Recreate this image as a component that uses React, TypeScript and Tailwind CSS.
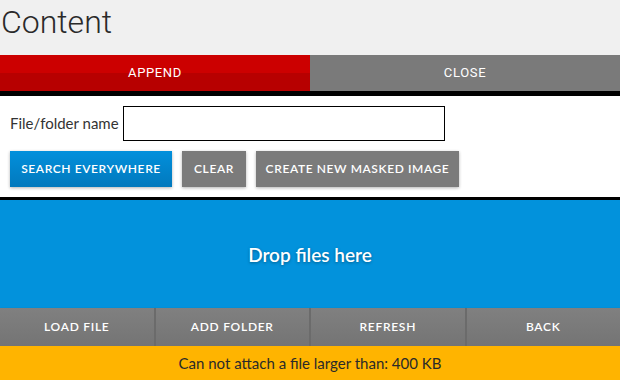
const sans = "font-['Lato','Noto_Sans',sans-serif]";

const ActionButton = ({ label, width, blue }: { label: string; width: string; blue?: boolean }) => (
  <button
    className={`h-[36px] ${width} whitespace-nowrap text-[12px] font-semibold tracking-[0.05em] text-white shadow-[0_1px_3px_rgba(0,0,0,0.3)] ${
      blue ? "bg-gradient-to-b from-[#0290dc] to-[#0279bd]" : "bg-[#7b7b7b]"
    }`}
  >
    {label}
  </button>
);

const BottomButton = ({ label, last }: { label: string; last?: boolean }) => (
  <button
    className={`flex-1 text-[12px] font-semibold tracking-[0.06em] text-white ${
      last ? "" : "border-r-2 border-[#6b6b6b]"
    }`}
  >
    {label}
  </button>
);

export default function App() {
  return (
    <div className={`flex h-[380px] w-[620px] flex-col overflow-hidden bg-white ${sans}`}>
      <header className="h-[55px] bg-[#f0f0f0] shadow-[0_1px_3px_rgba(0,0,0,0.15)]">
        <h1 className="pl-[1px] pt-[2px] font-['Roboto',sans-serif] text-[32px] font-light leading-[40px] text-[#2a2a2a]">
          Content
        </h1>
      </header>

      <nav className="flex h-[36px] font-['Roboto',sans-serif] text-[13px] tracking-[0.05em] text-white">
        <button className="flex-1 bg-gradient-to-b from-[#cc0000] from-50% to-[#b70000] to-50%">APPEND</button>
        <button className="flex-1 bg-[#7a7a7a]">CLOSE</button>
      </nav>
      <div className="h-[5px] bg-black" />

      <section className="flex flex-col gap-[10px] px-[10px] py-[10px]">
        <div className="flex items-center gap-[4px]">
          <label className="text-[15px] text-[#333]">File/folder name</label>
          <input className="h-[35px] w-[322px] border border-black bg-white outline-none" />
        </div>
        <div className="flex gap-[10px]">
          <ActionButton label="SEARCH EVERYWHERE" width="w-[162px]" blue />
          <ActionButton label="CLEAR" width="w-[64px]" />
          <ActionButton label="CREATE NEW MASKED IMAGE" width="w-[203px]" />
        </div>
      </section>
      <div className="h-[3px] bg-black" />

      <div className="flex h-[108px] items-center justify-center bg-[#0292dc] pt-[3px]">
        <span className="text-[19px] font-semibold text-white [text-shadow:0_1px_3px_rgba(0,0,0,0.35)]">
          Drop files here
        </span>
      </div>

      <div className="flex h-[38px] bg-gradient-to-b from-[#808080] to-[#747474] shadow-[0_1px_2px_rgba(0,0,0,0.3)]">
        <BottomButton label="LOAD FILE" />
        <BottomButton label="ADD FOLDER" />
        <BottomButton label="REFRESH" />
        <BottomButton label="BACK" last />
      </div>

      <div className="flex flex-1 items-center justify-center bg-[#ffb400] text-[15px] text-[#2a2a2a]">
        Can not attach a file larger than: 400 KB
      </div>
    </div>
  );
}
